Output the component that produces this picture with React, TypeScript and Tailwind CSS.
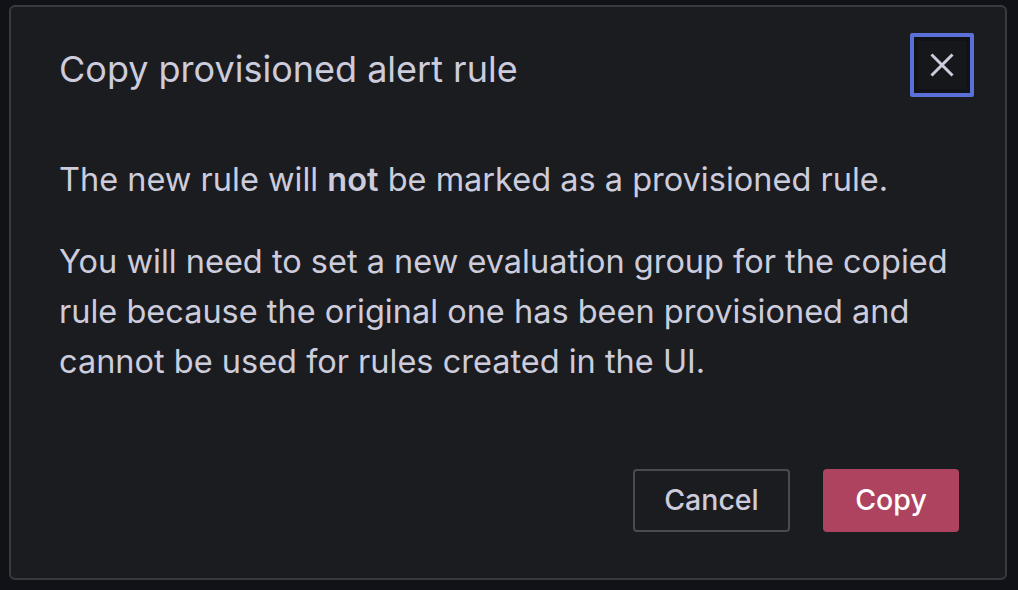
import React from "react";

export default function App() {
  return (
    <div
      className="w-[1018px] h-[590px] bg-[#111217] pt-[5px] pl-[9px] overflow-hidden"
      style={{ fontFamily: "Inter, 'Noto Sans', sans-serif" }}
    >
      <div className="w-[998px] h-[575px] border-2 border-[#393a40] rounded-[6px] bg-[#1b1c20] flex flex-col text-[#ccccdc]">
        <div className="flex items-center justify-between pl-[48px] pr-[31px] pt-[26px]">
          <h1 className="text-[36px] leading-[44px] font-normal mt-[8px]">Copy provisioned alert rule</h1>
          <button className="w-[64px] h-[64px] border-[4px] border-[#5b6fd8] rounded-[2px] flex items-center justify-center bg-[#111217]">
            <div className="w-[48px] h-[48px] flex items-center justify-center bg-[#16171b]">
              <svg width="24" height="24" viewBox="0 0 24 24" fill="none" stroke="#ccccdc" strokeWidth="3">
                <path d="M1.5 1.5L22.5 22.5M22.5 1.5L1.5 22.5" />
              </svg>
            </div>
          </button>
        </div>
        <div className="pl-[48px] pr-[40px] pt-[58px] text-[32.5px] leading-[50px]">
          <p>
            The new rule will <strong className="font-semibold">not</strong> be marked as a provisioned rule.
          </p>
          <p className="mt-[32px]">
            You will need to set a new evaluation group for the copied rule because the original one has been provisioned and cannot be used for rules created in the UI.
          </p>
        </div>
        <div className="flex-1" />
        <div className="flex justify-end gap-[33px] pr-[46px] pb-[46px]">
          <button className="w-[157px] h-[63px] border-2 border-[#4a4b51] rounded-[4px] text-[28.5px] font-medium text-[#ccccdc]">
            Cancel
          </button>
          <button className="w-[136px] h-[63px] rounded-[4px] bg-[#ad435f] text-[28.5px] font-medium text-white">
            Copy
          </button>
        </div>
      </div>
    </div>
  );
}
